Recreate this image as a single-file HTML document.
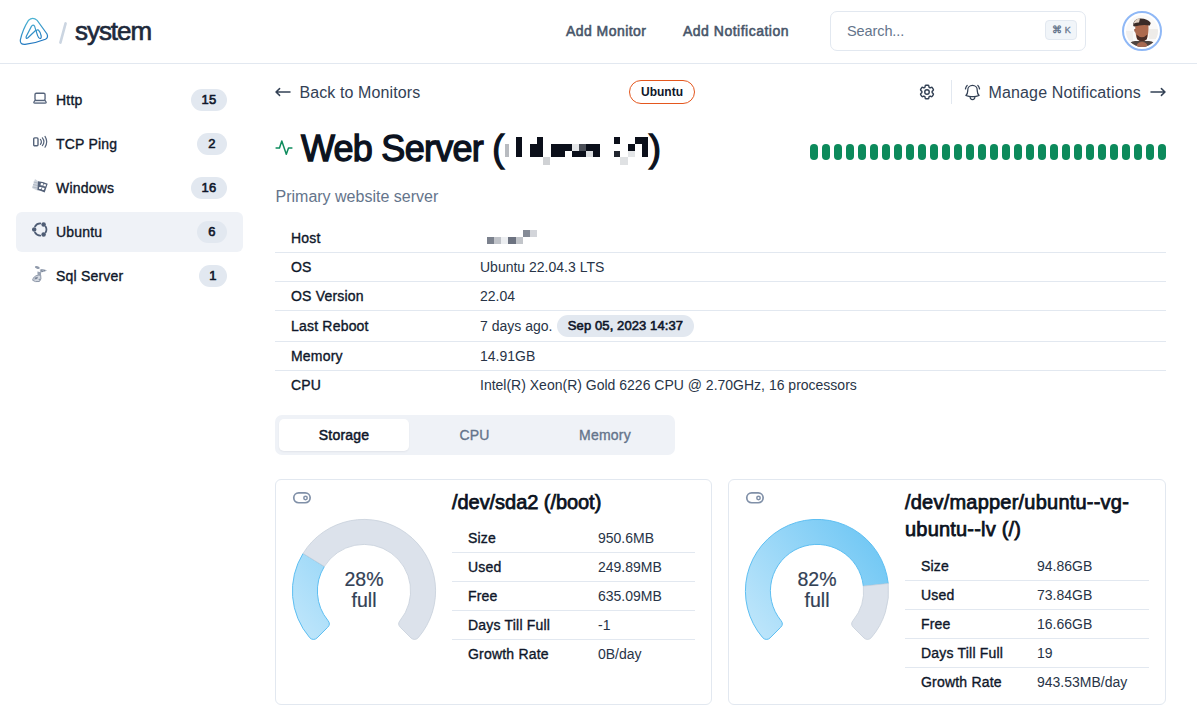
<!DOCTYPE html>
<html><head><meta charset="utf-8">
<style>
*{box-sizing:border-box;margin:0;padding:0}
html,body{width:1197px;height:717px;overflow:hidden;background:#fff}
body{position:relative;font-family:"Liberation Sans",sans-serif;color:#0f172a}
.a{position:absolute;white-space:nowrap;line-height:1}
.med{-webkit-text-stroke:0.35px currentColor;letter-spacing:0.2px}
.hline{position:absolute;height:1px;background:#e2e8f0}
.badge{position:absolute;height:22px;border-radius:11px;background:#e2e8f0;font-size:13px;color:#0f172a;-webkit-text-stroke:0.6px #0f172a;text-align:center;line-height:22px;letter-spacing:0.2px}
.side{font-size:14px;color:#0f172a}
.lbl{font-size:14px;color:#0f172a}
.val{font-size:14px;color:#283447}
.pill{position:absolute;top:144px;width:8px;height:16px;border-radius:4px;background:#0c8a5b}
.px{position:absolute;background:#0b0f1a}
</style></head><body>

<!-- HEADER -->
<svg class="a" style="left:16px;top:14px" width="36" height="36" viewBox="0 0 36 36">
  <defs><linearGradient id="lg" gradientUnits="userSpaceOnUse" x1="14" y1="3" x2="22" y2="31"><stop offset="0" stop-color="#4fb8d4"></stop><stop offset="1" stop-color="#1a6fbd"></stop></linearGradient></defs>
  <path d="M12.6 6.2 Q16.8 2.6 21.2 6.4 L31 20 Q32.6 23.6 29.4 25.2 Q20 29 9 30.4 Q4 30.6 4.3 26.2 Q6.6 15.5 12.6 6.2 Z" fill="none" stroke="url(#lg)" stroke-width="1.2"></path>
  <path d="M10.2 22.6 L15.4 12.4 Q17 9.9 18.6 12.2 L19.8 16.2 L12 23.8 Q9.6 25.2 10.2 22.6 Z" fill="none" stroke="url(#lg)" stroke-width="1.2"></path>
  <path d="M20.3 17.6 Q20.6 15.2 22.4 16 Q24.2 17.6 25.2 22 Q25.4 24.6 23.9 24.5 Q22.6 24.3 21.6 21.6 Z" fill="none" stroke="url(#lg)" stroke-width="1.2"></path>
</svg>
<svg class="a" style="left:56px;top:20px" width="14" height="26" viewBox="0 0 14 26"><path d="M9.6 3.4 L4.4 22.6" stroke="#cbd5e1" stroke-width="2.6" stroke-linecap="round"></path></svg>
<div class="a" style="left:75px;top:18.3px;font-size:26px;color:#1e293b;letter-spacing:-1.05px;-webkit-text-stroke:0.65px #1e293b">system</div>

<div class="a" style="left:566px;top:24px;font-size:14px;color:#475569;letter-spacing:0.45px;-webkit-text-stroke:0.55px #475569">Add Monitor</div>
<div class="a" style="left:683px;top:24px;font-size:14px;color:#475569;letter-spacing:0.5px;-webkit-text-stroke:0.55px #475569">Add Notification</div>

<div class="a" style="left:830px;top:11px;width:256px;height:40px;border:1px solid #e2e8f0;border-radius:7px"></div>
<div class="a" style="left:847px;top:23.8px;font-size:14.5px;color:#64748b;letter-spacing:-0.1px">Search...</div>
<div class="a" style="left:1045px;top:20px;width:32px;height:20px;border:1px solid #e2e8f0;background:#f1f5f9;border-radius:4px"></div><div class="a" style="left:1051.8px;top:25px;font-size:9.5px;font-weight:700;color:#64748b">⌘</div><div class="a" style="left:1064.8px;top:25.5px;font-size:9px;color:#64748b;-webkit-text-stroke:0.3px #64748b">K</div>

<div class="a" style="left:1122px;top:11px;width:40px;height:40px;border-radius:50%;border:2px solid #8fb8f6;background:#fff"></div>
<svg class="a" style="left:1126px;top:15px" width="32" height="32" viewBox="0 0 32 32">
  <defs><clipPath id="avc"><circle cx="16" cy="16" r="16"></circle></clipPath></defs>
  <g clip-path="url(#avc)">
    <rect width="32" height="32" fill="#faf9f8"></rect>
    <rect x="23" y="14" width="9" height="10" fill="#eeece9"></rect>
    <rect x="0" y="16" width="7" height="10" fill="#f1efed"></rect>
    <path d="M1 32 Q3 26.4 9 26 L23 26 Q29 26.4 31 32 Z" fill="#4e4440"></path>
    <path d="M10 32 Q11 27 16 27 Q21 27 22 32 Z" fill="#a76a52"></path>
    <path d="M9.3 9 Q8.8 20 11.4 24.4 Q16 28.4 20.4 24.4 Q23 20 22.4 9 Z" fill="#ad6a4e"></path>
    <path d="M8.2 14 Q7.6 16.5 9.6 18 L10 14 Z" fill="#9c5c44"></path>
    <path d="M10.4 19.6 Q16 25 21.4 19.6 L21 24 Q16 28.6 11 24 Z" fill="#4a2e27"></path>
    <path d="M7.2 11 Q7 3.2 14.6 3.4 Q21.6 3.4 24.8 8 L23.8 10.4 Q16 9 8.4 11.6 Z" fill="#3a2b27"></path>
    <path d="M8 7.4 Q9.6 3.6 14 3.5 L13 7.4 Q10.6 7.2 8 8.6 Z" fill="#e2d3c6"></path>
  </g>
</svg>
<div class="hline" style="left:0;top:63px;width:1197px"></div>

<!-- SIDEBAR -->
<div class="a" style="left:16px;top:212px;width:227px;height:40px;border-radius:6px;background:#eff2f7"></div>

<svg class="a" style="left:32px;top:91px" width="16" height="14" viewBox="0 0 16 14">
  <path d="M3 9.4 L1.9 11 Q1.5 12.1 2.8 12.1 H13.2 Q14.5 12.1 14.1 11 L13.05 9.4 Z" fill="#dfe3ea" stroke="#56647b" stroke-width="1.2" stroke-linejoin="round"></path>
  <rect x="3" y="2.2" width="10.05" height="7.2" rx="1.3" fill="#fff" stroke="#56647b" stroke-width="1.35"></rect>
</svg>
<div class="a side med" style="left:56px;top:93.2px">Http</div>
<div class="badge" style="left:191px;top:89px;width:36px">15</div>

<svg class="a" style="left:32px;top:135px" width="16" height="14" viewBox="0 0 16 14">
  <rect x="1.7" y="2.9" width="4.3" height="7.8" rx="1" fill="none" stroke="#56647b" stroke-width="1.4"></rect>
  <path d="M8.4 4.4 Q10.4 6.9 8.4 9.3 M10.4 2.8 Q13.4 6.7 10.4 10.6 M13 1.4 Q16.4 6.8 13 12.2" fill="none" stroke="#56647b" stroke-width="1.2" stroke-linecap="round"></path>
</svg>
<div class="a side med" style="left:56px;top:137.2px">TCP Ping</div>
<div class="badge" style="left:197px;top:133px;width:30px">2</div>

<svg class="a" style="left:32px;top:179px" width="16" height="15" viewBox="0 0 16 15">
  <path d="M3 0 L6.2 2.2 L5.7 11.7 L0 9 Z" fill="#c3cad5" opacity="0.8"></path><path d="M1.5 3 L5.8 4 M1 5.5 L5.6 6.5 M0.6 8 L5.4 9" stroke="#9aa4b4" stroke-width="0.8" opacity="0.7"></path>
  <path d="M6 2.2 Q11 2.6 15.7 4.7 L12.7 13.4 Q9 11.6 5.4 11 Z" fill="#56637a"></path>
  <path d="M8.9 3.9 L11.2 4.2 L10.8 6.5 L8.5 6.3 Z M11.7 4.9 L14.2 5.5 L13.5 7.5 L11.3 7.1 Z M7.2 7.9 L9.7 8.1 L9.2 10 L7 9.9 Z M10.2 8.5 L12.6 9 L11.9 11 L9.8 10.7 Z" fill="#fff"></path>
</svg>
<div class="a side med" style="left:56px;top:181.2px">Windows</div>
<div class="badge" style="left:191px;top:177px;width:36px">16</div>

<svg class="a" style="left:32px;top:222px" width="16" height="16" viewBox="0 0 16 16">
  <path d="M3.02 4.45 A6.1 6.1 0 0 1 8.30 1.40 M13.58 4.45 A6.1 6.1 0 0 1 13.58 10.55 M8.30 13.60 A6.1 6.1 0 0 1 3.02 10.55 " fill="none" stroke="#4f5d75" stroke-width="1.75" stroke-linecap="round"></path>
  <circle cx="2.20" cy="7.50" r="2.25" fill="#4f5d75"></circle><circle cx="11.62" cy="2.38" r="2.25" fill="#4f5d75"></circle><circle cx="11.62" cy="12.62" r="2.25" fill="#4f5d75"></circle>
</svg>
<div class="a side med" style="left:56px;top:225.2px">Ubuntu</div>
<div class="badge" style="left:197px;top:221px;width:30px">6</div>

<svg class="a" style="left:32px;top:264px" width="18" height="20" viewBox="0 0 18 20">
  <ellipse cx="5.3" cy="3.5" rx="2.5" ry="1.3" transform="rotate(15 5.3 3.5)" fill="#8f99aa"></ellipse>
  <path d="M7.7 5.6 Q11.5 4.2 15 6.6 Q12 8.8 8.2 8.2 Z" fill="#a9b2c0"></path>
  <path d="M9 6.2 L10.2 6 M11.6 6.4 L13 6.6 M9.4 7.4 L11 7.4" stroke="#6f7a8e" stroke-width="0.8"></path>
  <path d="M5.4 7.4 L9.2 8.3 L8.9 11.6 L5.5 10.8 Z" fill="#98a2b2"></path>
  <path d="M1 14.8 Q3 10.6 8.7 11.2 Q9.8 15.6 7.4 17.5 Q3 18.3 0.7 16.3 Z" fill="#d3d8e0" stroke="#8d97a8" stroke-width="1"></path>
  <path d="M3 13.4 L6 12.8 L5.2 15 L2.4 15.4 Z M6.4 15.4 L8 14.6 L7.6 16.6 Z" fill="#7c879a"></path>
</svg>
<div class="a side med" style="left:56px;top:269.2px">Sql Server</div>
<div class="badge" style="left:199px;top:265px;width:28px">1</div>

<!-- MAIN TOP ROW -->
<svg class="a" style="left:272px;top:84px" width="22" height="16" viewBox="0 0 22 16">
  <path d="M18 8 H4 M7.6 4.6 L4 8 L7.6 11.4" fill="none" stroke="#334155" stroke-width="1.5" stroke-linecap="round" stroke-linejoin="round"></path>
</svg>
<div class="a" style="left:299.5px;top:85px;font-size:16px;color:#334155;letter-spacing:0.1px">Back to Monitors</div>

<div class="a" style="left:629px;top:80px;width:66px;height:24px;border:1.5px solid #e4571e;border-radius:12px;font-size:12px;font-weight:700;color:#0f172a;text-align:center;line-height:22.5px">Ubuntu</div>

<svg class="a" style="left:918px;top:83px" width="18" height="18" viewBox="0 0 24 24">
  <path d="M9.594 3.94c.09-.542.56-.94 1.11-.94h2.593c.55 0 1.02.398 1.11.94l.213 1.281c.063.374.313.686.645.87.074.04.147.083.22.127.325.196.72.257 1.075.124l1.217-.456a1.125 1.125 0 0 1 1.37.49l1.296 2.247a1.125 1.125 0 0 1-.26 1.431l-1.003.827c-.293.241-.438.613-.43.992a7.723 7.723 0 0 1 0 .255c-.008.378.137.75.43.991l1.004.827c.424.35.534.955.26 1.43l-1.298 2.247a1.125 1.125 0 0 1-1.369.491l-1.217-.456c-.355-.133-.75-.072-1.076.124a6.47 6.47 0 0 1-.22.128c-.331.183-.581.495-.644.869l-.213 1.281c-.09.543-.56.94-1.11.94h-2.594c-.55 0-1.019-.398-1.11-.94l-.213-1.281c-.062-.374-.312-.686-.644-.87a6.52 6.52 0 0 1-.22-.127c-.325-.196-.72-.257-1.076-.124l-1.217.456a1.125 1.125 0 0 1-1.369-.49l-1.297-2.247a1.125 1.125 0 0 1 .26-1.431l1.004-.827c.292-.24.437-.613.43-.991a6.932 6.932 0 0 1 0-.255c.007-.38-.138-.751-.43-.992l-1.004-.827a1.125 1.125 0 0 1-.26-1.43l1.297-2.247a1.125 1.125 0 0 1 1.37-.491l1.216.456c.356.133.751.072 1.076-.124.072-.044.146-.086.22-.128.332-.183.582-.495.644-.869l.214-1.28Z" fill="none" stroke="#334155" stroke-width="1.9" stroke-linejoin="round"></path>
  <path d="M15 12a3 3 0 1 1-6 0 3 3 0 0 1 6 0Z" fill="none" stroke="#334155" stroke-width="1.9"></path>
</svg>
<div class="a" style="left:951px;top:80px;width:1px;height:24px;background:#e2e8f0"></div>
<svg class="a" style="left:962.6px;top:82.6px" width="19" height="19" viewBox="0 0 24 24">
  <path d="M14.857 17.082a23.848 23.848 0 0 0 5.454-1.31A8.967 8.967 0 0 1 18 9.75V9A6 6 0 0 0 6 9v.75a8.967 8.967 0 0 1-2.312 6.022c1.733.64 3.56 1.085 5.455 1.31m5.714 0a24.255 24.255 0 0 1-5.714 0m5.714 0a3 3 0 1 1-5.714 0M3.124 7.5A8.969 8.969 0 0 1 5.292 3m13.416 0a8.969 8.969 0 0 1 2.168 4.5" fill="none" stroke="#334155" stroke-width="1.6" stroke-linecap="round" stroke-linejoin="round"></path>
</svg>
<div class="a" style="left:988.5px;top:84.5px;font-size:16px;color:#334155;letter-spacing:0.15px">Manage Notifications</div>
<svg class="a" style="left:1148px;top:84px" width="20" height="16" viewBox="0 0 20 16">
  <path d="M3 8 H17 M13.4 4.6 L17 8 L13.4 11.4" fill="none" stroke="#334155" stroke-width="1.5" stroke-linecap="round" stroke-linejoin="round"></path>
</svg>

<!-- TITLE -->
<svg class="a" style="left:272px;top:134px" width="24" height="26" viewBox="0 0 24 26">
  <path d="M4.1 13.9 H7.5 L9.8 7 L14.3 20.3 L16.5 13.9 H19.9" fill="none" stroke="#0e8c5d" stroke-width="1.5" stroke-linecap="round" stroke-linejoin="round"></path>
</svg>
<div class="a" style="left:301px;top:130.5px;font-size:36px;color:#0b1220;letter-spacing:-0.75px;-webkit-text-stroke:1.3px #0b1220">Web Server (</div>
<div class="a" style="left:649px;top:130.5px;font-size:36px;color:#0b1220;-webkit-text-stroke:1.3px #0b1220">)</div>
<div class="px" style="left:504.7px;top:144px;width:4px;height:13.400000000000006px;background:#b8bbc0"></div><div class="px" style="left:515.8px;top:137px;width:6.2000000000000455px;height:20.400000000000006px;background:#0b0f1a"></div><div class="px" style="left:536.8px;top:137px;width:6.600000000000023px;height:20.400000000000006px;background:#0b0f1a"></div><div class="px" style="left:529.7px;top:144px;width:7.099999999999909px;height:13.400000000000006px;background:#0b0f1a"></div><div class="px" style="left:543.4px;top:157.4px;width:7.100000000000023px;height:7.400000000000006px;background:#d0d2d5"></div><div class="px" style="left:550.5px;top:144px;width:14px;height:13.400000000000006px;background:#0b0f1a"></div><div class="px" style="left:564.5px;top:144px;width:7px;height:6.699999999999989px;background:#0b0f1a"></div><div class="px" style="left:571.5px;top:144px;width:7.399999999999977px;height:6.699999999999989px;background:#e4e6e8"></div><div class="px" style="left:578.9px;top:144px;width:6.7000000000000455px;height:6.699999999999989px;background:#4a4e57"></div><div class="px" style="left:585.6px;top:144px;width:14px;height:6.699999999999989px;background:#0b0f1a"></div><div class="px" style="left:571.5px;top:150.7px;width:14.100000000000023px;height:6.700000000000017px;background:#0b0f1a"></div><div class="px" style="left:585.6px;top:150.7px;width:7px;height:6.700000000000017px;background:#dcdee1"></div><div class="px" style="left:592.6px;top:150.7px;width:7px;height:6.700000000000017px;background:#0b0f1a"></div><div class="px" style="left:614.3px;top:137px;width:6px;height:7px;background:#0b0f1a"></div><div class="px" style="left:614.3px;top:150.7px;width:6px;height:6.700000000000017px;background:#22262f"></div><div class="px" style="left:620.3px;top:157.4px;width:7.400000000000091px;height:7.400000000000006px;background:#dfe1e3"></div><div class="px" style="left:627.7px;top:144px;width:7px;height:6.699999999999989px;background:#0b0f1a"></div><div class="px" style="left:627.7px;top:150.7px;width:7px;height:6.700000000000017px;background:#e3e5e7"></div><div class="px" style="left:634.7px;top:137px;width:13.699999999999932px;height:7px;background:#0b0f1a"></div><div class="px" style="left:641.7px;top:144px;width:6.699999999999932px;height:13.400000000000006px;background:#0b0f1a"></div>

<div class="pill" style="left:810px"></div><div class="pill" style="left:822px"></div><div class="pill" style="left:834px"></div><div class="pill" style="left:846px"></div><div class="pill" style="left:858px"></div><div class="pill" style="left:870px"></div><div class="pill" style="left:882px"></div><div class="pill" style="left:894px"></div><div class="pill" style="left:906px"></div><div class="pill" style="left:918px"></div><div class="pill" style="left:930px"></div><div class="pill" style="left:942px"></div><div class="pill" style="left:954px"></div><div class="pill" style="left:966px"></div><div class="pill" style="left:978px"></div><div class="pill" style="left:990px"></div><div class="pill" style="left:1002px"></div><div class="pill" style="left:1014px"></div><div class="pill" style="left:1026px"></div><div class="pill" style="left:1038px"></div><div class="pill" style="left:1050px"></div><div class="pill" style="left:1062px"></div><div class="pill" style="left:1074px"></div><div class="pill" style="left:1086px"></div><div class="pill" style="left:1098px"></div><div class="pill" style="left:1110px"></div><div class="pill" style="left:1122px"></div><div class="pill" style="left:1134px"></div><div class="pill" style="left:1146px"></div><div class="pill" style="left:1158px"></div>

<div class="a" style="left:275.5px;top:188.8px;font-size:16px;color:#64748b">Primary website server</div>

<!-- INFO TABLE -->
<div class="hline" style="left:275px;top:252px;width:891px"></div>
<div class="hline" style="left:275px;top:281px;width:891px"></div>
<div class="hline" style="left:275px;top:310px;width:891px"></div>
<div class="hline" style="left:275px;top:341px;width:891px"></div>
<div class="hline" style="left:275px;top:370px;width:891px"></div>

<div class="a lbl med" style="left:291px;top:231.0px">Host</div>
<div class="a lbl med" style="left:291px;top:260.0px">OS</div>
<div class="a lbl med" style="left:291px;top:289.0px">OS Version</div>
<div class="a lbl med" style="left:291px;top:319.0px">Last Reboot</div>
<div class="a lbl med" style="left:291px;top:349.0px">Memory</div>
<div class="a lbl med" style="left:291px;top:377.6px">CPU</div>

<div class="a" style="left:487px;top:237px;width:7px;height:7px;background:#7b818d"></div>
<div class="a" style="left:494px;top:237px;width:7px;height:7px;background:#c0c3c9"></div>
<div class="a" style="left:501px;top:237px;width:7px;height:7px;background:#eceef1"></div>
<div class="a" style="left:508px;top:237px;width:7.5px;height:7px;background:#6c7280"></div>
<div class="a" style="left:515.5px;top:237px;width:7px;height:7px;background:#c2c5ca"></div>
<div class="a" style="left:523px;top:230px;width:7px;height:7px;background:#858b96"></div>
<div class="a" style="left:530px;top:230px;width:7px;height:7px;background:#d3d5da"></div>

<div class="a val" style="left:480px;top:260.0px">Ubuntu 22.04.3 LTS</div>
<div class="a val" style="left:480px;top:289.0px">22.04</div>
<div class="a val" style="left:480px;top:319.0px">7 days ago.</div>
<div class="a" style="left:557px;top:315px;width:137px;height:22px;border-radius:11px;background:#e2e8f0;font-size:13px;color:#0f172a;-webkit-text-stroke:0.6px #0f172a;letter-spacing:0.1px;text-align:center;line-height:22px">Sep 05, 2023 14:37</div>
<div class="a val" style="left:480px;top:349.0px">14.91GB</div>
<div class="a val" style="left:480px;top:377.6px">Intel(R) Xeon(R) Gold 6226 CPU @ 2.70GHz, 16 processors</div>

<!-- TABS -->
<div class="a" style="left:275px;top:415px;width:400px;height:40px;border-radius:7px;background:#eff2f7"></div>
<div class="a" style="left:279px;top:419px;width:130px;height:32px;border-radius:5px;background:#fff;box-shadow:0 1px 2px rgba(15,23,42,0.06)"></div>
<div class="a med" style="left:279px;top:427.7px;width:130px;text-align:center;font-size:14px;color:#0f172a;-webkit-text-stroke:0.5px #0f172a">Storage</div>
<div class="a med" style="left:409.5px;top:427.7px;width:130px;text-align:center;font-size:14px;color:#64748b">CPU</div>
<div class="a med" style="left:540px;top:427.7px;width:130px;text-align:center;font-size:14px;color:#64748b">Memory</div>

<!-- CARDS -->
<div class="a" style="left:275px;top:479px;width:437px;height:226px;border:1px solid #e2e8f0;border-radius:6px"></div>
<div class="a" style="left:728px;top:479px;width:438px;height:226px;border:1px solid #e2e8f0;border-radius:6px"></div>

<svg class="a" style="left:292px;top:491px" width="20" height="13" viewBox="0 0 20 13">
  <rect x="1.75" y="1.85" width="16.4" height="9.9" rx="4.95" fill="none" stroke="#8090a8" stroke-width="1.7"></rect>
  <circle cx="13.5" cy="7" r="1.7" fill="none" stroke="#8090a8" stroke-width="1.5"></circle>
</svg>
<svg class="a" style="left:745px;top:491px" width="20" height="13" viewBox="0 0 20 13">
  <rect x="1.75" y="1.85" width="16.4" height="9.9" rx="4.95" fill="none" stroke="#8090a8" stroke-width="1.7"></rect>
  <circle cx="13.5" cy="7" r="1.7" fill="none" stroke="#8090a8" stroke-width="1.5"></circle>
</svg>

<svg id="g1" class="a" style="left:284px;top:511px" width="160" height="140"><defs><linearGradient id="bgg1" gradientUnits="userSpaceOnUse" x1="20" y1="140" x2="150" y2="40"><stop offset="0" stop-color="#c2e7fb"></stop><stop offset="1" stop-color="#70c7f4"></stop></linearGradient></defs><path d="M33.040 126.960 A5 5 0 0 1 25.713 126.685 A71.6 71.6 0 0 1 19.069 42.397 L40.344 55.527 A46.6 46.6 0 0 0 44.011 109.603 A5 5 0 0 1 43.685 116.315 Z" fill="url(#bgg1)" stroke="#5ebff2" stroke-width="1"></path><path d="M19.069 42.397 A71.6 71.6 0 1 1 134.287 126.685 A5 5 0 0 1 126.960 126.960 L116.315 116.315 A5 5 0 0 1 115.989 109.603 A46.6 46.6 0 1 0 40.344 55.527 Z" fill="#dce2eb" stroke="#c6cfda" stroke-width="0.8"></path></svg>
<svg id="g2" class="a" style="left:737px;top:511px" width="160" height="140"><defs><linearGradient id="bgg2" gradientUnits="userSpaceOnUse" x1="20" y1="140" x2="150" y2="40"><stop offset="0" stop-color="#c2e7fb"></stop><stop offset="1" stop-color="#70c7f4"></stop></linearGradient></defs><path d="M33.040 126.960 A5 5 0 0 1 25.713 126.685 A71.6 71.6 0 1 1 151.204 72.478 L126.342 75.105 A46.6 46.6 0 1 0 44.011 109.603 A5 5 0 0 1 43.685 116.315 Z" fill="url(#bgg2)" stroke="#5ebff2" stroke-width="1"></path><path d="M151.204 72.478 A71.6 71.6 0 0 1 134.287 126.685 A5 5 0 0 1 126.960 126.960 L116.315 116.315 A5 5 0 0 1 115.989 109.603 A46.6 46.6 0 0 0 126.342 75.105 Z" fill="#dce2eb" stroke="#c6cfda" stroke-width="0.8"></path></svg>

<div class="a" style="left:304px;top:570.4px;width:120px;text-align:center;font-size:19.5px;color:#334155;-webkit-text-stroke:0.2px #334155">28%</div>
<div class="a" style="left:304px;top:591.2px;width:120px;text-align:center;font-size:19.5px;color:#334155;-webkit-text-stroke:0.2px #334155">full</div>
<div class="a" style="left:757px;top:570.4px;width:120px;text-align:center;font-size:19.5px;color:#334155;-webkit-text-stroke:0.2px #334155">82%</div>
<div class="a" style="left:757px;top:591.2px;width:120px;text-align:center;font-size:19.5px;color:#334155;-webkit-text-stroke:0.2px #334155">full</div>

<div class="a" style="left:452px;top:491.6px;font-size:20px;color:#0b1220;letter-spacing:-0.05px;-webkit-text-stroke:0.75px #0b1220">/dev/sda2 (/boot)</div>
<div class="a" style="left:905px;top:491.6px;font-size:20px;color:#0b1220;letter-spacing:0.22px;-webkit-text-stroke:0.75px #0b1220">/dev/mapper/ubuntu--vg-</div>
<div class="a" style="left:905px;top:519.4px;font-size:20px;color:#0b1220;letter-spacing:0.2px;-webkit-text-stroke:0.75px #0b1220">ubuntu--lv (/)</div>

<div class="a lbl med" style="left:468px;top:531.15px">Size</div><div class="a val" style="left:598px;top:531.15px">950.6MB</div><div class="hline" style="left:452px;top:552px;width:243px"></div><div class="a lbl med" style="left:468px;top:560.15px">Used</div><div class="a val" style="left:598px;top:560.15px">249.89MB</div><div class="hline" style="left:452px;top:581px;width:243px"></div><div class="a lbl med" style="left:468px;top:589.15px">Free</div><div class="a val" style="left:598px;top:589.15px">635.09MB</div><div class="hline" style="left:452px;top:610px;width:243px"></div><div class="a lbl med" style="left:468px;top:618.15px">Days Till Full</div><div class="a val" style="left:598px;top:618.15px">-1</div><div class="hline" style="left:452px;top:639px;width:243px"></div><div class="a lbl med" style="left:468px;top:647.15px">Growth Rate</div><div class="a val" style="left:598px;top:647.15px">0B/day</div>
<div class="a lbl med" style="left:921px;top:559.15px">Size</div><div class="a val" style="left:1037px;top:559.15px">94.86GB</div><div class="hline" style="left:905px;top:580px;width:244px"></div><div class="a lbl med" style="left:921px;top:588.15px">Used</div><div class="a val" style="left:1037px;top:588.15px">73.84GB</div><div class="hline" style="left:905px;top:609px;width:244px"></div><div class="a lbl med" style="left:921px;top:617.15px">Free</div><div class="a val" style="left:1037px;top:617.15px">16.66GB</div><div class="hline" style="left:905px;top:638px;width:244px"></div><div class="a lbl med" style="left:921px;top:646.15px">Days Till Full</div><div class="a val" style="left:1037px;top:646.15px">19</div><div class="hline" style="left:905px;top:667px;width:244px"></div><div class="a lbl med" style="left:921px;top:675.15px">Growth Rate</div><div class="a val" style="left:1037px;top:675.15px">943.53MB/day</div>



</body></html>
